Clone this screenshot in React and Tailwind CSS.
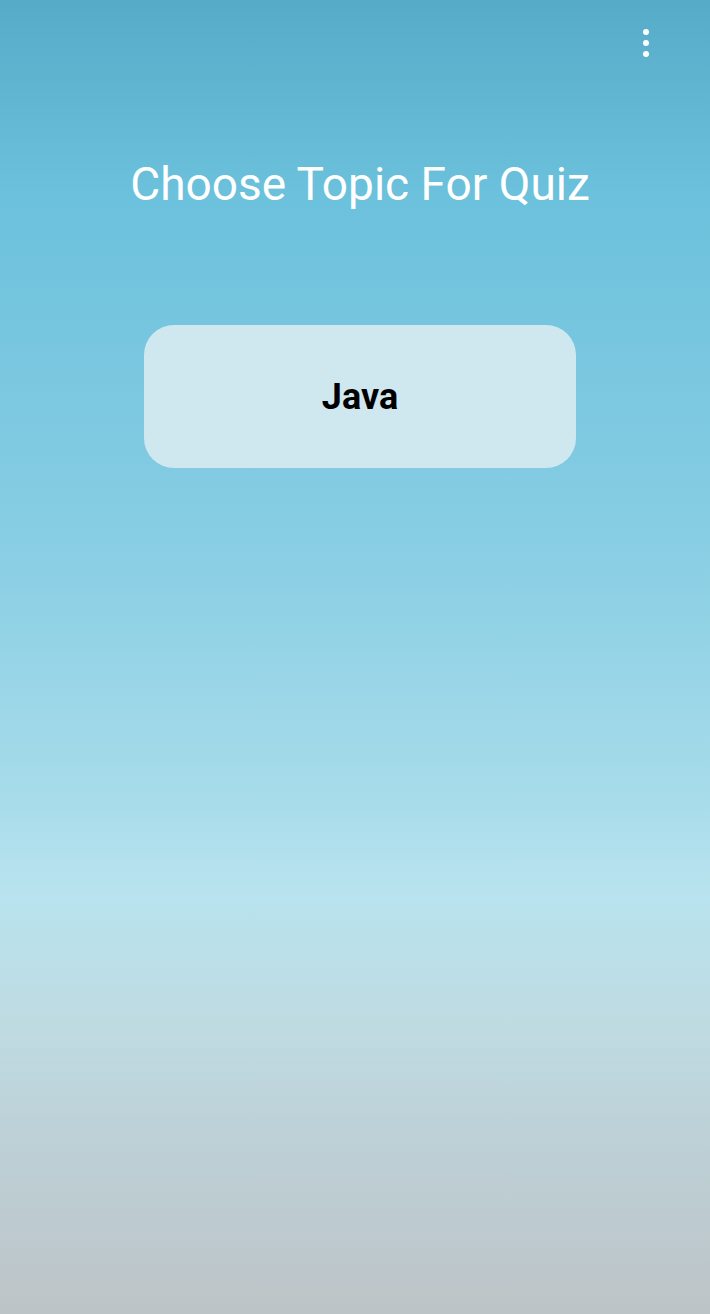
export default function App() {
  return (
    <div
      className="relative w-full h-[1314px] overflow-hidden flex flex-col items-center pl-[10px]
                 bg-[linear-gradient(180deg,#56abc8_0%,#6cc1dc_15%,#86cde3_40%,#a6dbea_60%,#b8e3ee_68%,#bfdbe2_78%,#bdcfd5_88%,#bdc4c7_100%)]"
      style={{ fontFamily: "Roboto, 'Noto Sans', sans-serif" }}
    >
      {/* overflow menu */}
      <div className="absolute top-[29px] right-[61px] flex flex-col gap-[5px]">
        <span className="w-[6px] h-[6px] rounded-full bg-white" />
        <span className="w-[6px] h-[6px] rounded-full bg-white" />
        <span className="w-[6px] h-[6px] rounded-full bg-white" />
      </div>

      <h1 className="mt-[153px] text-[46px] leading-[62px] text-white font-normal">
        Choose Topic For Quiz
      </h1>

      <button className="mt-[110px] w-[432px] h-[143px] rounded-[30px] bg-[#cfe8f0] flex items-center justify-center">
        <span className="text-[36px] font-bold text-black">Java</span>
      </button>
    </div>
  );
}
